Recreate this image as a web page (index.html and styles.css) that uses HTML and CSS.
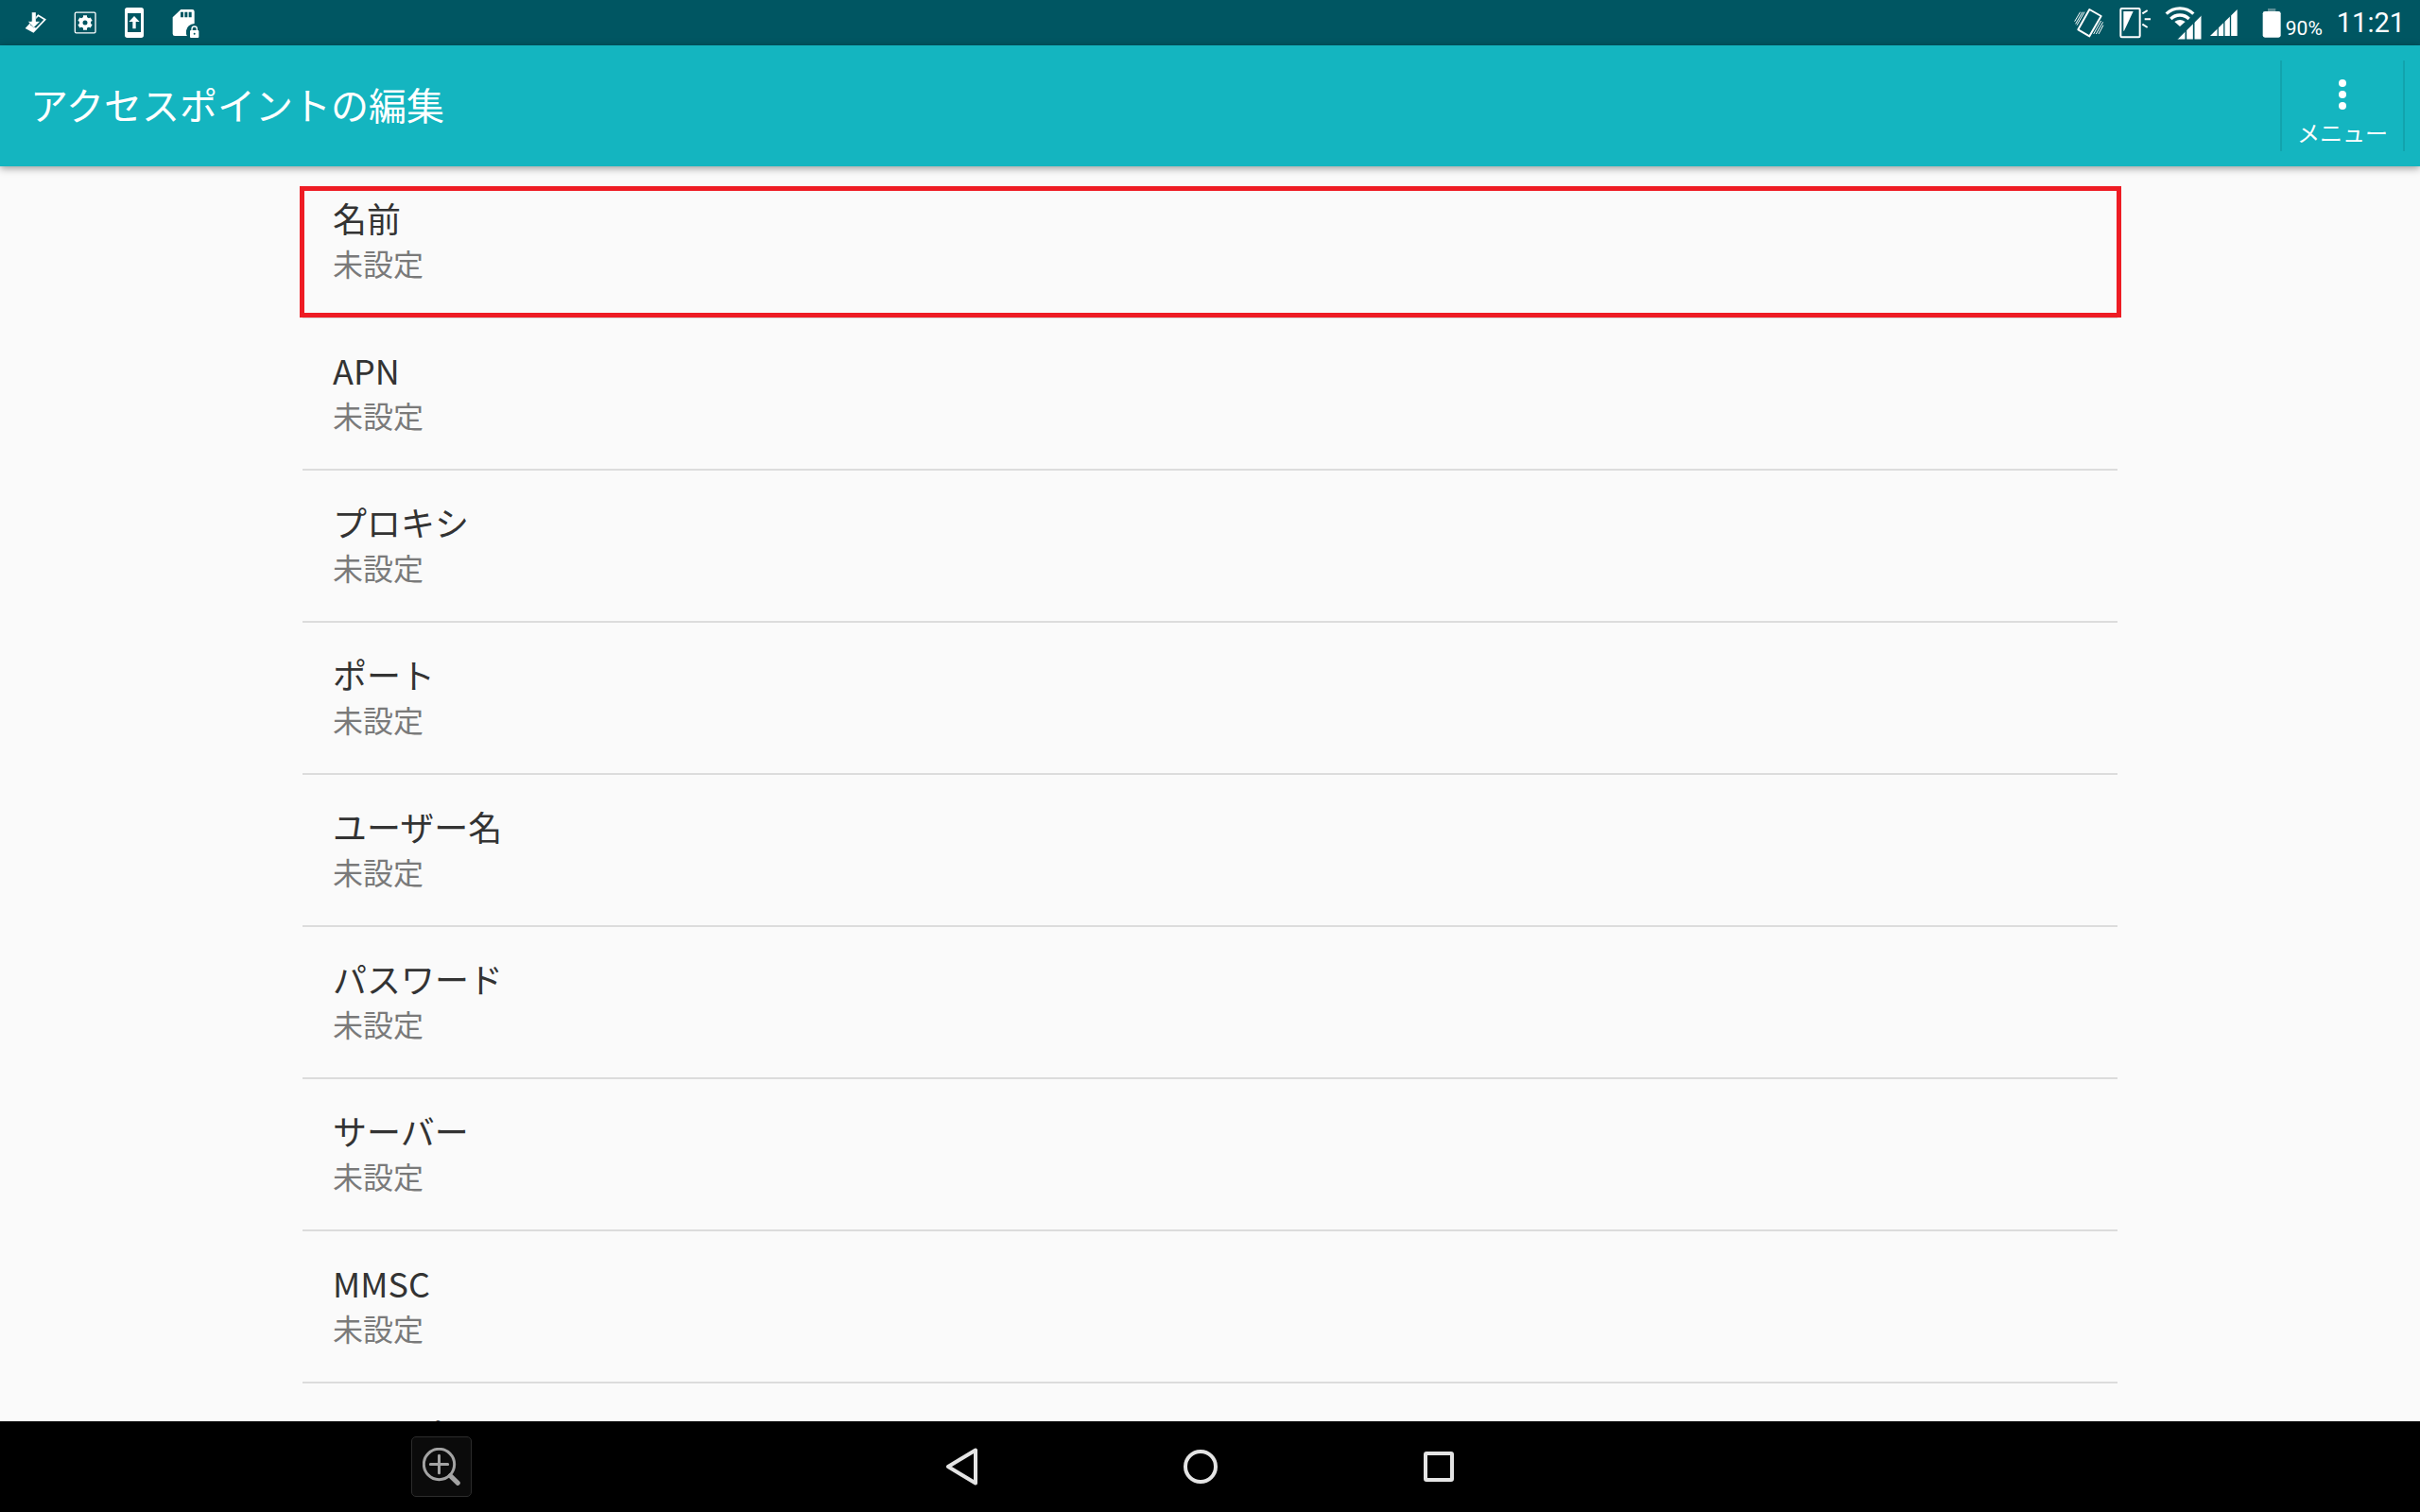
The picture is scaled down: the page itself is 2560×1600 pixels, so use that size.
FILE: index.html
```html
<!DOCTYPE html>
<html lang="ja">
<head>
<meta charset="utf-8">
<title>アクセスポイントの編集</title>
<link rel="stylesheet" href="styles.css">
</head>
<body>
<div class="status-bar">
  <div class="notifications">
    <svg class="icon-note" viewBox="36 0 156 144" aria-hidden="true">
      <path d="M121 49l22 13-37 39-22-12z" fill="none" stroke="#fff" stroke-width="5"/>
      <path d="M84 89l10-11 22 12-10 12z" fill="#fff"/>
      <path d="M101 39h13v29h13l-20 20-18-20h12z" fill="#fff" stroke="#005662" stroke-width="1"/>
    </svg>
    <svg class="icon-note" viewBox="192 0 156 144" aria-hidden="true">
      <rect x="238" y="39.500" width="65" height="65" rx="4" fill="none" stroke="#fff" stroke-width="4"/>
      <circle cx="270" cy="72" r="13" fill="none" stroke="#fff" stroke-width="11"/>
      <path d="M270 49v10M270 85v10M250 60.500l9 5M281 78.500l9 5M250 83.500l9-5M281 65.500l9-5" stroke="#fff" stroke-width="12"/>
    </svg>
    <svg class="icon-note" viewBox="348 0 156 144" aria-hidden="true">
      <path fill="#fff" fill-rule="evenodd" d="M404 24h44q8 0 8 8v80q0 8-8 8h-44q-8 0-8-8V32q0-8 8-8zM405 42v60h42V42z"/>
      <path d="M426 51l17 18h-12v22h-10V69h-12z" fill="#fff"/>
    </svg>
    <svg class="icon-note" viewBox="504 0 156 144" aria-hidden="true">
      <path d="M574 30h36q7 0 7 7v38q-22 2-26 22v10q0 4 3 7h-39q-7 0-7-7V55z" fill="#fff"/>
      <path d="M573 38h9v17h-9zM586 38h9v17h-9zM599 38h9v17h-9z" fill="#005662"/>
      <rect x="603" y="96" width="28" height="24" rx="3" fill="#fff"/>
      <path d="M609 97v-5a8 8 0 0 1 16 0v5" fill="none" stroke="#fff" stroke-width="4"/>
      <circle cx="617" cy="107" r="3" fill="#005662"/>
    </svg>
  </div>
  <div class="indicators">
    <svg class="icon-vibrate" viewBox="66 0 108 144" aria-hidden="true">
      <path d="M121 30l37 21-37 64-36-21z" fill="none" stroke="#fff" stroke-width="6" stroke-linejoin="round"/>
      <path d="M92 38l-18 30M99 38l-22 38M105 38l-24 42M158 66l-24 42M164 70l-22 38M165 80l-15 28" stroke="#fff" stroke-width="3"/>
    </svg>
    <svg class="icon-light" viewBox="210 0 114 144" aria-hidden="true">
      <rect x="220" y="27" width="61" height="91" rx="4" fill="none" stroke="#fff" stroke-width="6"/>
      <path d="M229 36h31l-29 62h-2z" fill="#fff"/>
      <path d="M289 43l16-10M296 61h19M289 77l16 10" stroke="#fff" stroke-width="6"/>
    </svg>
    <svg class="icon-wifi" viewBox="354 0 132 144" aria-hidden="true">
      <path d="M365 44a62 62 0 0 1 86 0M379 60a41 41 0 0 1 58 0" fill="none" stroke="#fff" stroke-width="10"/>
      <path d="M408 84l-17-15q17-12 34 0z" fill="#fff"/>
      <path d="M398 126L477 47v79z" fill="#fff" stroke="#005662" stroke-width="3"/>
      <path d="M427 90v37M452 65v62" stroke="#005662" stroke-width="5"/>
    </svg>
    <svg class="icon-signal" viewBox="498 0 102 144" aria-hidden="true">
      <path d="M504 114l86-84v84z" fill="#fff"/>
      <path d="M528.500 82v34M548.500 62v54M568.500 42v74" stroke="#005662" stroke-width="4"/>
    </svg>
    <svg class="icon-battery" viewBox="666 0 66 144" aria-hidden="true">
      <path d="M687 27h25v10h-25z" fill="#5c8e96"/>
      <rect x="671" y="36" width="57" height="83" rx="7" fill="#fff"/>
    </svg>
    <span class="percent">90%</span>
    <span class="clock">11:21</span>
  </div>
</div>

<header class="app-bar">
  <h1 class="title">アクセスポイントの編集</h1>
  <button class="menu" type="button">
    <svg class="icon-dots" viewBox="0 0 8 32" aria-hidden="true">
      <circle cx="4" cy="4" r="4" fill="#fff"/><circle cx="4" cy="16" r="4" fill="#fff"/><circle cx="4" cy="28" r="4" fill="#fff"/>
    </svg>
    <span class="menu-text">メニュー</span>
  </button>
</header>

<main class="content">
  <ul class="settings">
    <li class="item highlighted"><button class="row" type="button"><span class="name">名前</span><span class="value">未設定</span></button></li>
    <li class="item"><button class="row" type="button"><span class="name">APN</span><span class="value">未設定</span></button></li>
    <li class="item"><button class="row" type="button"><span class="name">プロキシ</span><span class="value">未設定</span></button></li>
    <li class="item"><button class="row" type="button"><span class="name">ポート</span><span class="value">未設定</span></button></li>
    <li class="item"><button class="row" type="button"><span class="name">ユーザー名</span><span class="value">未設定</span></button></li>
    <li class="item"><button class="row" type="button"><span class="name">パスワード</span><span class="value">未設定</span></button></li>
    <li class="item"><button class="row" type="button"><span class="name">サーバー</span><span class="value">未設定</span></button></li>
    <li class="item"><button class="row" type="button"><span class="name">MMSC</span><span class="value">未設定</span></button></li>
    <li class="item"><button class="row" type="button"><span class="name">MMSプロキシ</span></button></li>
  </ul>
</main>

<nav class="nav-bar">
  <button class="zoom" type="button" aria-label="拡大">
    <svg class="icon-zoom" viewBox="438 756 120 120" aria-hidden="true">
      <circle cx="490.500" cy="808.500" r="48.500" fill="none" stroke="#a3a3a3" stroke-width="9"/>
      <path d="M463 808.500h55M490.500 781v55" stroke="#a3a3a3" stroke-width="9" stroke-linecap="round"/>
      <path d="M526 845l24 23" stroke="#a3a3a3" stroke-width="15" stroke-linecap="round"/>
    </svg>
  </button>
  <div class="keys">
    <button class="key" type="button" aria-label="戻る">
      <svg class="icon-key" viewBox="0 0 40 40" aria-hidden="true"><path d="M34 2.500v35L5 20z" fill="none" stroke="#e4e4e4" stroke-width="4" stroke-linejoin="round"/></svg>
    </button>
    <button class="key" type="button" aria-label="ホーム">
      <svg class="icon-key" viewBox="0 0 40 40" aria-hidden="true"><circle cx="20" cy="20" r="16" fill="none" stroke="#e4e4e4" stroke-width="4"/></svg>
    </button>
    <button class="key" type="button" aria-label="履歴">
      <svg class="icon-key" viewBox="0 0 40 40" aria-hidden="true"><rect x="6" y="6" width="28" height="28" rx="1" fill="none" stroke="#e4e4e4" stroke-width="4" stroke-linejoin="round"/></svg>
    </button>
  </div>
</nav>
</body>
</html>
```
FILE: styles.css
```css
* {
  box-sizing: border-box;
}

body {
  margin: 0;
  height: 100vh;
  display: flex;
  flex-direction: column;
  overflow: hidden;
  background: #fafafa;
  font-family: "Noto Sans CJK JP", "Noto Sans", sans-serif;
}

button {
  margin: 0;
  padding: 0;
  border: 0;
  background: none;
  color: inherit;
  font: inherit;
}

svg {
  display: block;
  flex: none;
}

/* Status bar */
.status-bar {
  flex: none;
  height: 48px;
  display: flex;
  justify-content: space-between;
  padding: 0 16px 0 12px;
  background: #005662;
  color: #fff;
}

.notifications,
.indicators {
  display: flex;
  align-items: center;
}

.icon-note { width: 52px; height: 48px; }
.icon-vibrate { width: 36px; height: 48px; margin-right: 12px; }
.icon-light { width: 38px; height: 48px; margin-right: 10px; }
.icon-wifi { width: 44px; height: 48px; margin-right: 4px; }
.icon-signal { width: 34px; height: 48px; margin-right: 22px; }
.icon-battery { width: 22px; height: 48px; margin-right: 4px; }

.percent {
  width: 54px;
  padding-top: 12px;
  font: 21px/24px Roboto, sans-serif;
}

.clock {
  font: 29px/48px Roboto, sans-serif;
}

/* App bar */
.app-bar {
  position: relative;
  z-index: 1;
  flex: none;
  display: flex;
  align-items: center;
  justify-content: space-between;
  padding: 16px 16px 16px 32px;
  background: #14b5c0;
  box-shadow: 0 2px 8px rgba(0, 0, 0, 0.4);
  color: #fff;
}

.title {
  margin: 0;
  padding-bottom: 4px;
  font-size: 40px;
  font-weight: 400;
  line-height: 60px;
}

.menu {
  width: 132px;
  height: 96px;
  display: flex;
  flex-direction: column;
  align-items: center;
  padding-top: 20px;
  border: solid #12a3ad;
  border-width: 0 2px;
}

.icon-dots { width: 8px; height: 32px; }

.menu-text {
  margin-top: 8px;
  font-size: 24px;
  line-height: 32px;
}

/* Settings list */
.content {
  flex: 1;
  min-height: 0;
  overflow: hidden;
  padding: 0 12.5%;
}

.settings {
  margin: 0;
  padding: 0;
  list-style: none;
}

.item {
  position: relative;
  border-bottom: 2px solid #dcdcdc;
}

.row {
  width: 100%;
  display: flex;
  flex-direction: column;
  padding: 30px 32px 33px;
  text-align: left;
}

.name {
  color: #333;
  font-size: 36px;
  line-height: 48px;
}

.value {
  color: #7a7a7a;
  font-size: 32px;
  line-height: 48px;
}

.highlighted::after {
  content: "";
  position: absolute;
  inset: 21px -4px -1px -3px;
  border: 5px solid #ee1c24;
  pointer-events: none;
}

/* Navigation bar */
.nav-bar {
  flex: none;
  height: 96px;
  display: flex;
  align-items: center;
  padding-left: 17%;
  background: #000;
}

.zoom {
  width: 64px;
  height: 64px;
  display: flex;
  align-items: center;
  justify-content: center;
  border: 1px solid #2c2c2c;
  border-radius: 5px;
  background: #0b0b0b;
}

.icon-zoom { width: 40px; height: 40px; }

.keys {
  display: flex;
  margin-left: 393px;
}

.key {
  width: 252px;
  height: 96px;
  display: flex;
  align-items: center;
  justify-content: center;
}

.icon-key { width: 40px; height: 40px; }
```
